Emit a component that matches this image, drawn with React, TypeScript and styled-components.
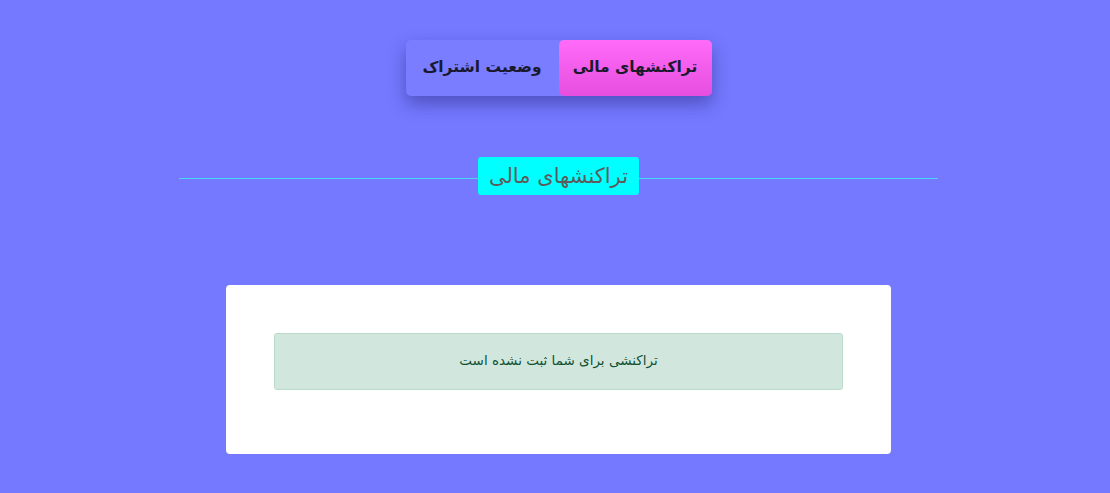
import React from "react";
import styled, { createGlobalStyle } from "styled-components";

const GlobalStyle = createGlobalStyle`
  html, body {
    margin: 0;
    padding: 0;
    background-color: #7579ff;
  }
  body {
    font-family: "DejaVu Sans", "Noto Sans", sans-serif;
    direction: rtl;
  }
`;

const PageStyled = styled.div`
  min-height: 493px;
  padding: 40px 0 0 7px;
  box-sizing: border-box;
  display: flex;
  flex-direction: column;
  align-items: center;
`;

const TabsStyled = styled.div`
  display: flex;
  height: 56px;
  border-radius: 5px;
  background-color: #7a7dff;
  box-shadow: 0 8px 18px rgba(30, 30, 110, 0.45);
`;

const TabStyled = styled.button<{ $active?: boolean }>`
  border: none;
  margin: 0;
  height: 100%;
  width: 153px;
  padding: 0 0 2px;
  border-radius: 5px;
  font-family: inherit;
  font-size: 15.5px;
  font-weight: bold;
  color: #1a1a2e;
  cursor: pointer;
  background: ${(p) =>
    p.$active ? "linear-gradient(180deg, #ff6cf8 0%, #e64edf 100%)" : "transparent"};
`;

const DividerStyled = styled.div`
  width: 759px;
  margin-top: 61px;
  display: flex;
  align-items: center;

  &::before,
  &::after {
    content: "";
    flex: 1;
    height: 1px;
    margin-top: 4px;
    background-color: #45d6f5;
  }
`;

const DividerLabelStyled = styled.h2`
  margin: 0;
  height: 38px;
  width: 161px;
  display: flex;
  align-items: center;
  justify-content: center;
  background-color: #00ffff;
  border-radius: 3px;
  color: #5c5c5c;
  font-size: 21px;
  font-weight: normal;
`;

const CardStyled = styled.div`
  margin-top: 90px;
  width: 665px;
  box-sizing: border-box;
  padding: 48px 48px 64px;
  background-color: #ffffff;
  border-radius: 4px;
`;

const AlertStyled = styled.div`
  height: 57px;
  box-sizing: border-box;
  padding-bottom: 4px;
  display: flex;
  align-items: center;
  justify-content: center;
  background-color: #d1e7dd;
  border: 1px solid #badbcc;
  border-radius: 3px;
  color: #0f5132;
  font-size: 13.5px;
`;

const App: React.FC = () => {
  return (
    <>
      <GlobalStyle />
      <PageStyled>
        <TabsStyled>
          <TabStyled $active>تراکنشهای مالی</TabStyled>
          <TabStyled>وضعیت اشتراک</TabStyled>
        </TabsStyled>
        <DividerStyled>
          <DividerLabelStyled>تراکنشهای مالی</DividerLabelStyled>
        </DividerStyled>
        <CardStyled>
          <AlertStyled>تراکنشی برای شما ثبت نشده است</AlertStyled>
        </CardStyled>
      </PageStyled>
    </>
  );
};

export default App;
